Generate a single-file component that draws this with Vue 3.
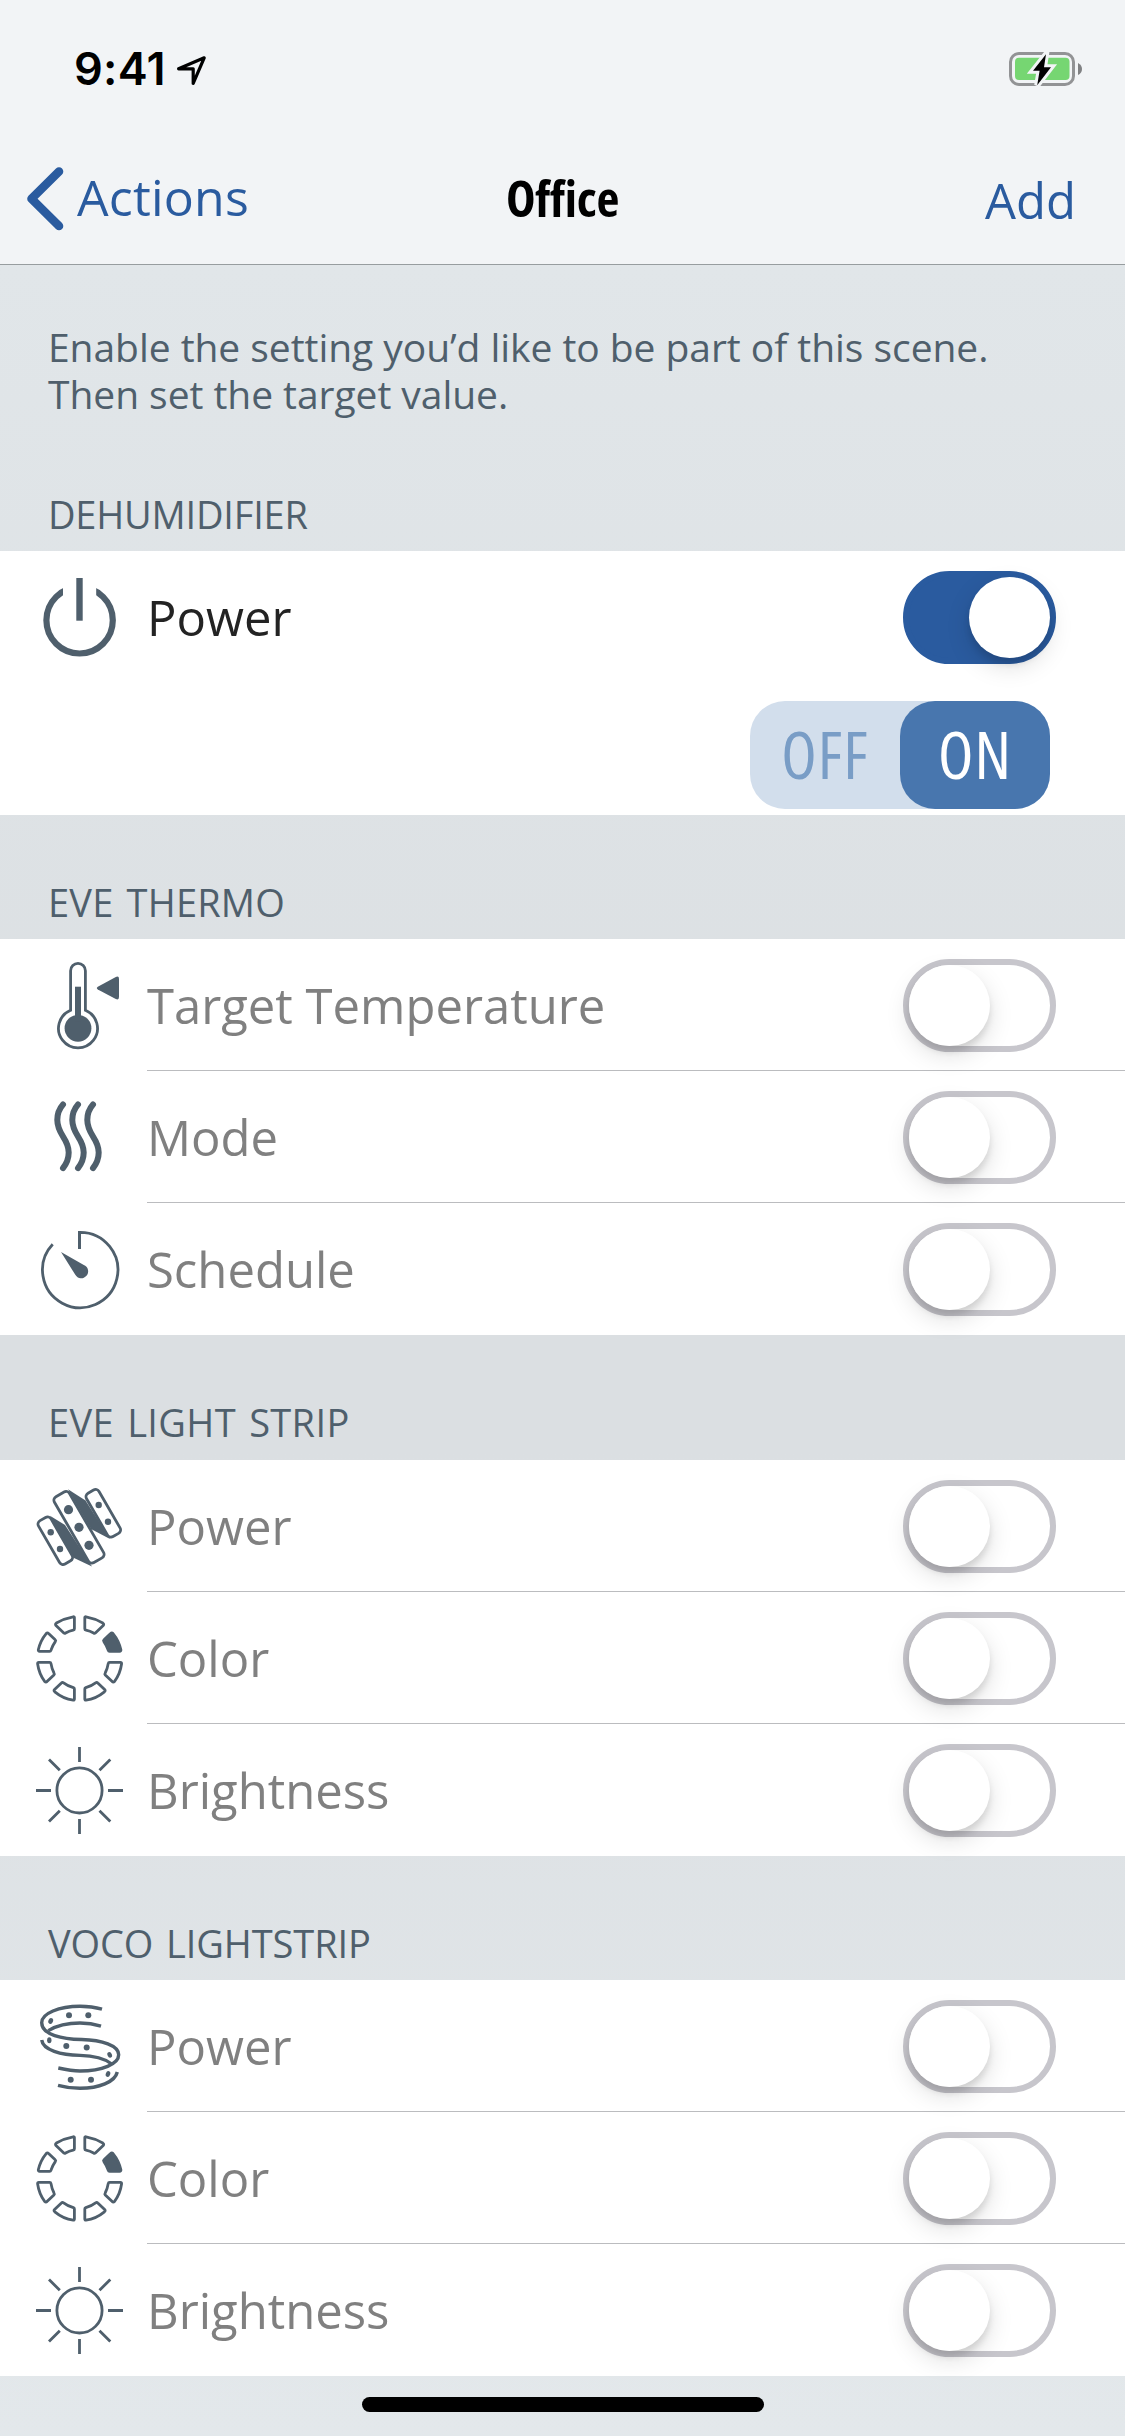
<script setup>
import { ref } from 'vue';

const sections = ref([
	{
		name: 'DEHUMIDIFIER',
		tracking: -0.2,
		rows: [{ label: 'Power', icon: 'power', enabled: true, value: 'ON' }],
	},
	{
		name: 'EVE THERMO',
		tracking: 0.2,
		rows: [
			{ label: 'Target Temperature', icon: 'thermo', enabled: false },
			{ label: 'Mode', icon: 'mode', enabled: false },
			{ label: 'Schedule', icon: 'schedule', enabled: false },
		],
	},
	{
		name: 'EVE LIGHT STRIP',
		tracking: 0.35,
		rows: [
			{ label: 'Power', icon: 'strip', enabled: false },
			{ label: 'Color', icon: 'color', enabled: false },
			{ label: 'Brightness', icon: 'sun', enabled: false },
		],
	},
	{
		name: 'VOCO LIGHTSTRIP',
		tracking: -0.1,
		rows: [
			{ label: 'Power', icon: 'coil', enabled: false },
			{ label: 'Color', icon: 'color', enabled: false },
			{ label: 'Brightness', icon: 'sun', enabled: false },
		],
	},
]);

function toggleRow(row) {
	row.enabled = !row.enabled;
}
</script>

<template>
	<div class="screen">
		<header class="top">
			<div class="status-bar">
				<span class="time">9:41</span>
				<svg class="location" viewBox="0 0 34 34">
					<path d="M4.6 16.8L30.2 5.8L19.2 31.4V16.8Z" />
				</svg>
				<svg class="battery" viewBox="0 0 80 42">
					<rect class="shell" x="5.5" y="5.5" width="63" height="31" rx="8.5" />
					<path class="cap" d="M73 15q4 2 4 6t-4 6z" />
					<rect class="charge" x="10" y="9.7" width="54.5" height="22.4" rx="4" />
					<path class="bolt-gap" d="M41 6.3L28 22.7h6.6L32.2 37.2L46 19.3h-7z" />
					<path class="bolt" d="M41 6.3L28 22.7h6.6L32.2 37.2L46 19.3h-7z" />
				</svg>
			</div>
			<nav class="nav-bar">
				<a class="back">
					<svg viewBox="0 0 44 70">
						<path d="M36 7.5L8.5 34.7L36 62" />
					</svg>
					<span>Actions</span>
				</a>
				<h1>Office</h1>
				<a class="add">Add</a>
			</nav>
		</header>

		<main>
			<p class="intro">
				Enable the setting you’d like to be part of this scene.<br />
				Then set the target value.
			</p>

			<section v-for="section in sections" :key="section.name">
				<h2 :style="{ letterSpacing: section.tracking + 'px' }">{{ section.name }}</h2>
				<div class="group">
					<div
						v-for="(row, i) in section.rows"
						:key="i"
						class="row"
						:class="{ enabled: row.enabled }"
					>
						<svg class="icon" viewBox="0 0 96 96">
							<g v-if="row.icon === 'power'">
								<circle cx="47.6" cy="51.3" r="33.2" stroke-width="6.2" />
								<path class="blank" d="M31 12h33.2v22h-33.2z" />
								<path class="solid" d="M44.3 9h6.4v42.7h-6.4z" />
							</g>
							<g v-else-if="row.icon === 'thermo'">
								<path
									d="M38.6 53.3V13.8a7.4 7.4 0 0 1 14.8 0V53.3a19.5 19.5 0 1 1 -14.8 0z"
								/>
								<circle class="solid" cx="46" cy="71.3" r="13.4" />
								<path class="solid" d="M43 29.7h6v35h-6z" />
								<path
									class="solid"
									d="M65.8 29.8L83.8 20Q87 18.6 87 22V40Q87 43.6 83.8 42L65.8 32.4Q63.8 31.1 65.8 29.8z"
								/>
							</g>
							<g v-else-if="row.icon === 'mode'" stroke-width="6" stroke-linecap="round">
								<path
									v-for="n in 3"
									:key="n"
									:transform="`translate(${(n - 1) * 15} 0)`"
									d="M31 15.5C27 20 25.3 25 25.3 31C25.3 46 36.7 49 36.7 63.5C36.7 69 35 74 31 79.2"
								/>
							</g>
							<g v-else-if="row.icon === 'schedule'">
								<path d="M47.5 28V11.3A37.7 37.7 0 1 1 20.7 23.2" />
								<path class="solid" d="M46 10h3v18h-3z" />
								<path class="solid" d="M29 31L51.8 43.9A6.9 6.9 0 1 1 43.3 53.8z" />
							</g>
							<g v-else-if="row.icon === 'strip'">
								<path class="solid" d="M18 37.7L33 47L60 88.5L42 80z" />
								<path class="solid" d="M36 11.3L53.5 22.5L78 61L59 51z" />
								<g class="plate">
									<rect
										x="16.1"
										y="37.7"
										width="14.4"
										height="50"
										rx="4"
										transform="rotate(-30 23.3 62.7)"
									/>
									<rect
										x="64.1"
										y="10.3"
										width="14.4"
										height="50"
										rx="4"
										transform="rotate(-30 71.3 35.3)"
									/>
									<rect
										x="38.3"
										y="11.3"
										width="17.4"
										height="76"
										rx="4"
										transform="rotate(-30 47 49.3)"
									/>
								</g>
								<g class="solid">
									<circle cx="18.7" cy="54.3" r="3.2" />
									<circle cx="28" cy="71" r="3.2" />
									<circle cx="36.5" cy="31.7" r="4.6" />
									<circle cx="47" cy="49.3" r="4.6" />
									<circle cx="57" cy="67.3" r="4.6" />
									<circle cx="66.7" cy="27" r="3.2" />
									<circle cx="76" cy="43.7" r="3.2" />
								</g>
							</g>
							<g v-else-if="row.icon === 'color'">
								<!-- right half first, then its mirror image -->
								<g
									v-for="side in ['right', 'left']"
									:key="side"
									:transform="side === 'left' ? 'translate(95.2 0) scale(-1 1)' : null"
								>
									<path
										d="M52.8 7.6Q52.8 6.6 54 6.8Q63 8.4 70.8 13Q72.4 14.2 71.2 15.6L63.4 23Q62.6 23.6 61.6 23Q58 21 54 20.2Q52.8 20 52.8 18.8Z"
									/>
									<path
										:class="{ picked: side === 'right' }"
										d="M78.6 23.6Q79.8 22.4 81 23.6Q86.8 30.6 88.9 39.8Q89.1 41.3 87.6 41.3H77.6Q76.6 41.3 76.2 40.2Q74.8 35.6 71.9 31.6Q71.1 30.6 72 29.8Z"
									/>
									<path
										d="M77.6 52.4H88.4Q89.7 52.4 89.6 53.8Q88.2 64 82.4 71.6Q81.3 72.8 80.2 71.6L73.3 65Q72.4 64 73.2 63Q75.4 58.8 76.2 53.6Q76.4 52.4 77.6 52.4Z"
									/>
									<path
										d="M63.6 72.8Q64.8 72 65.8 73L72.6 79.4Q73.7 80.6 72.4 81.8Q64.2 88.6 54 90.2Q52.8 90.3 52.8 89V79Q52.8 78 53.8 77.6Q59.4 76 63.6 72.8Z"
									/>
								</g>
							</g>
							<g v-else-if="row.icon === 'sun'">
								<circle cx="47.5" cy="48.4" r="22.6" />
								<path
									d="M47.5 5v15M47.5 77v15M4 48.5h15M76 48.5h15M17 17.5l10.8 10.8M78.3 17.5l-10.8 10.8M17 79.5l10.8 -10.8M78.3 79.5l-10.8 -10.8"
								/>
							</g>
							<g v-else-if="row.icon === 'coil'">
								<g stroke-width="3.4">
									<path
										d="M70 11.2C63 9.2 56 8.3 48 8.3C27 8.3 9.7 15.5 9.7 24.7C9.7 37 31 41 49.7 41.5C70 42 86.7 47.5 86.7 56.8C86.7 66 70 73 48 73C40 73 33 71.5 26.3 70"
									/>
									<path d="M69 28.2C62 26 55 25 48 25C36 25 24 28 16.3 32.6" />
									<path d="M9.7 42C11 52 29 57.2 48 57.4C60 57.6 72 60 79.7 66" />
									<path d="M85.3 74C83 84 67 90.3 48 90.3C40 90.3 33 89.2 26 87.3" />
								</g>
								<g class="solid">
									<circle cx="37" cy="17.2" r="3" />
									<circle cx="56.3" cy="17.2" r="3" />
									<ellipse cx="18.7" cy="23" rx="2.3" ry="2.9" transform="rotate(25 18.7 23)" />
									<ellipse cx="17.3" cy="42.2" rx="2.2" ry="3" />
									<circle cx="34.3" cy="48" r="3" />
									<circle cx="54.7" cy="49.4" r="3" />
									<ellipse cx="77.7" cy="56.9" rx="2.2" ry="2.9" transform="rotate(-25 77.7 56.9)" />
									<ellipse cx="76" cy="76" rx="2.2" ry="3" transform="rotate(20 76 76)" />
									<circle cx="59" cy="81.8" r="3" />
									<circle cx="38.7" cy="81.8" r="3" />
								</g>
							</g>
						</svg>
						<div class="row-body">
							<span class="label">{{ row.label }}</span>
							<button
								type="button"
								class="switch"
								:class="{ on: row.enabled }"
								@click="toggleRow(row)"
							></button>
						</div>
						<div v-if="row.value" class="segmented">
							<span
								v-for="option in ['OFF', 'ON']"
								:key="option"
								class="segment"
								:class="{ selected: row.value === option }"
								@click="row.value = option"
							>
								{{ option }}
							</span>
						</div>
					</div>
				</div>
			</section>
		</main>

		<div class="home-indicator"></div>
	</div>
</template>

<style>
body {
	margin: 0;
}
</style>

<style scoped>
.screen {
	display: flex;
	flex-direction: column;
	width: 1125px;
	height: 2436px;
	overflow: hidden;
	font-family: 'Open Sans', 'Noto Sans', sans-serif;
	background: linear-gradient(#e1e6e9 264px, #dbdfe2 1200px, #dbdfe2 1450px, #e3e8eb 2436px);
}
.top {
	height: 264px;
	background: #f2f4f6;
	border-bottom: 1px solid #979d9f;
}
.status-bar {
	display: flex;
	align-items: center;
	height: 138px;
	padding: 0 40px 0 74px;
}
.time {
	width: 100px;
	padding-bottom: 2px;
	font-family: Inter, sans-serif;
	font-size: 45px;
	font-weight: 600;
	letter-spacing: 0.3px;
	color: #000;
}
.location {
	width: 34px;
	height: 34px;
	fill: none;
	stroke: #000;
	stroke-width: 3.2;
	stroke-linejoin: round;
}
.battery {
	width: 80px;
	height: 42px;
	margin-left: auto;
}
.shell {
	fill: none;
	stroke: #929395;
	stroke-width: 3;
}
.cap {
	fill: #808183;
}
.charge {
	fill: #76d672;
}
.bolt-gap {
	fill: #f2f4f6;
	stroke: #f2f4f6;
	stroke-width: 6;
}
.nav-bar {
	display: grid;
	grid-template-columns: minmax(0, 1fr) auto minmax(0, 1fr);
	align-items: center;
	height: 122px;
	padding: 0 23px;
	font-size: 50px;
}
.back,
.add {
	color: #2a5b9f;
}
.back {
	display: flex;
	align-items: center;
	gap: 10px;
}
.back svg {
	width: 44px;
	height: 70px;
	fill: none;
	stroke: #2a5b9f;
	stroke-width: 8.6;
	stroke-linecap: round;
	stroke-linejoin: round;
}
.back span {
	padding-bottom: 4px;
	letter-spacing: 0.2px;
}
h1 {
	margin: 0;
	padding-bottom: 3px;
	font-size: 50px;
	font-weight: 700;
	font-stretch: 75%;
	letter-spacing: -0.2px;
	color: #000;
}
.add {
	justify-self: end;
	margin-right: 26px;
	padding-top: 2px;
	font-size: 49px;
}
.intro {
	height: 104px;
	margin: 0;
	padding: 58px 48px 0;
	font-size: 39px;
	line-height: 47px;
	letter-spacing: -0.05px;
	white-space: nowrap;
	color: #4f5f6c;
}
h2 {
	box-sizing: border-box;
	height: 124px;
	margin: 0;
	padding: 60px 48px 0;
	font-size: 38px;
	font-weight: 400;
	line-height: 54px;
	word-spacing: 3px;
	color: #4f5f6c;
}
section:nth-of-type(3) h2 {
	height: 125px;
}
.group {
	background: #fff;
}
.row {
	display: grid;
	grid-template-columns: 96px 1fr;
	column-gap: 19px;
	padding-left: 32px;
}
.icon {
	align-self: center;
	width: 96px;
	height: 96px;
	fill: none;
	stroke: #4f5f6c;
	stroke-width: 2.8;
}
.solid {
	fill: #4f5f6c;
	stroke: none;
}
.picked {
	fill: #4f5f6c;
}
.blank {
	fill: #fff;
	stroke: none;
}
.plate {
	fill: #fff;
}
.row-body {
	display: flex;
	align-items: center;
	justify-content: space-between;
	box-sizing: border-box;
	height: 132px;
	padding: 2px 69px 0 0;
	border-bottom: 1px solid #bbbcbf;
}
.row:last-child .row-body {
	border-bottom-color: transparent;
}
.label {
	padding-bottom: 2px;
	font-size: 49px;
	color: #808080;
}
.enabled .label {
	color: #232323;
}
.switch {
	box-sizing: border-box;
	width: 153px;
	height: 93px;
	padding: 0;
	border: 6px solid #c7c6cc;
	border-radius: 47px;
	background: #fff;
	text-align: left;
}
.switch::before {
	content: '';
	display: block;
	width: 81px;
	height: 81px;
	border-radius: 50%;
	background: #fff;
	box-shadow: 0 9px 24px rgba(0, 0, 0, 0.13), 0 6px 6px rgba(0, 0, 0, 0.1);
}
.switch.on {
	border-color: #2a5b9f;
	background: #2a5b9f;
}
.switch.on::before {
	margin-left: 60px;
}
.segmented {
	grid-column: 2;
	justify-self: end;
	display: flex;
	width: 300px;
	height: 108px;
	margin: 18px 75px 6px 0;
	border-radius: 35px;
	background: #d2deec;
}
.segment {
	display: flex;
	align-items: center;
	justify-content: center;
	box-sizing: border-box;
	width: 150px;
	padding-bottom: 3px;
	border-radius: 35px;
	font-size: 65px;
	font-weight: 500;
	font-stretch: 77%;
	letter-spacing: 1px;
	color: #799dc6;
}
.segment.selected {
	background: #4876ae;
	color: #fff;
}
.home-indicator {
	width: 402px;
	height: 15px;
	margin: 21px auto 0;
	border-radius: 8px;
	background: #000;
}
</style>
